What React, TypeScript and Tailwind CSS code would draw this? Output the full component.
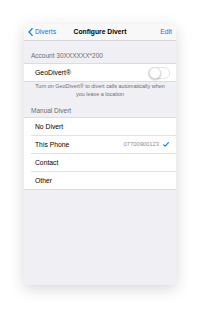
export default function App() {
  const font = { fontFamily: '"Liberation Sans", Arial, sans-serif' };
  return (
    <div className="w-[200px] h-[309px] bg-white pt-[24px] pl-[24px]" style={font}>
      <div className="w-[152px] h-[261px] bg-[#efeff4] flex flex-col overflow-hidden shadow-[0_4px_14px_rgba(0,0,0,0.16)]">
        {/* Nav bar */}
        <div className="h-[17px] shrink-0 bg-[#f8f8f8] border-b border-[#d8d8dc] grid grid-cols-[1fr_auto_1fr] items-center">
          <div className="flex items-center pl-[4px] text-[#007aff] text-[6.75px] leading-[8px]">
            <svg width="5" height="8" viewBox="0 0 5 8" className="shrink-0">
              <path d="M4.2 0.6 L1 4 L4.2 7.4" fill="none" stroke="#007aff" strokeWidth="1.2" strokeLinecap="round" strokeLinejoin="round" />
            </svg>
            <span className="ml-[2px]">Diverts</span>
          </div>
          <div className="text-[6.75px] leading-[8px] font-bold text-black">Configure Divert</div>
          <div className="flex justify-end pr-[4px] text-[#007aff] text-[6.75px] leading-[8px]">Edit</div>
        </div>

        {/* Account header */}
        <div className="h-[22px] shrink-0 pt-[11px] pl-[7px] text-[6.5px] leading-[7px] text-[#6d6d72]">
          Account 30XXXXXX*200
        </div>

        {/* GeoDivert group */}
        <div className="bg-white border-y border-[#dcdce0]">
          <div className="h-[17px] flex items-center justify-between pl-[11px] pr-[6px]">
            <span className="text-[6.9px] leading-[8px] text-black">GeoDivert®</span>
            <div className="w-[22px] h-[12px] rounded-full border border-[#e3e3e6] bg-white relative">
              <div className="absolute left-[-0.5px] top-[-0.5px] w-[12px] h-[12px] rounded-full bg-white border border-[#e0e0e0] shadow-[0_1px_2px_rgba(0,0,0,0.25)]" />
            </div>
          </div>
        </div>

        {/* Footer */}
        <div className="h-[16px] shrink-0 text-center text-[5.45px] leading-[8px] text-[#6d6d72]">
          <div>Turn on GeoDivert® to divert calls automatically when</div>
          <div>you leave a location</div>
        </div>

        {/* Manual Divert header */}
        <div className="h-[19px] shrink-0 pt-[9px] pl-[7px] text-[6.5px] leading-[7px] text-[#6d6d72]">
          Manual Divert
        </div>

        {/* Manual Divert group */}
        <div className="bg-white border-y border-[#dcdce0]">
          <div className="pl-[7px]">
            <div className="h-[18px] border-b border-[#e2e2e5] flex items-center pl-[4px] pr-[7px]">
              <span className="text-[6.75px] leading-[8px] text-black">No Divert</span>
            </div>
          </div>
          <div className="pl-[7px]">
            <div className="h-[18px] border-b border-[#e2e2e5] flex items-center justify-between pl-[4px] pr-[7px]">
              <span className="text-[6.75px] leading-[8px] text-black">This Phone</span>
              <div className="flex items-center">
                <span className="text-[5.8px] leading-[7px] text-[#8e8e93]">07700900123</span>
                <svg width="6" height="5" viewBox="0 0 6 5" className="ml-[4px]">
                  <path d="M0.6 2.8 L2.1 4.2 L5.4 0.7" fill="none" stroke="#007aff" strokeWidth="1.1" strokeLinecap="round" strokeLinejoin="round" />
                </svg>
              </div>
            </div>
          </div>
          <div className="pl-[7px]">
            <div className="h-[18px] border-b border-[#e2e2e5] flex items-center pl-[4px] pr-[7px]">
              <span className="text-[6.75px] leading-[8px] text-black">Contact</span>
            </div>
          </div>
          <div className="pl-[7px]">
            <div className="h-[17px] flex items-center pl-[4px] pr-[7px]">
              <span className="text-[6.75px] leading-[8px] text-black">Other</span>
            </div>
          </div>
        </div>
      </div>
    </div>
  );
}
